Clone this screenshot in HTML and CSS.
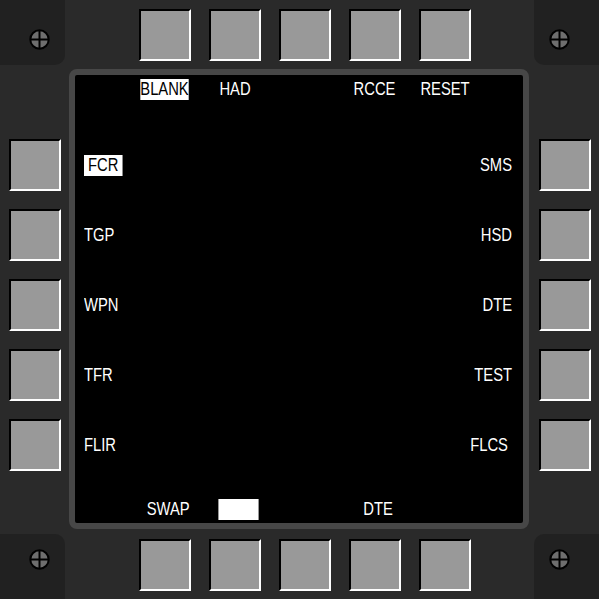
FILE: index.html
```html
<!DOCTYPE html>
<html>
<head>
<meta charset="utf-8">
<title>MFD</title>
<link rel="stylesheet" href="styles.css">
</head>
<body>
<div class="device">
  <div class="corner tl"><svg class="screw" viewBox="0 0 21 21"><circle cx="10.5" cy="10.5" r="9.2"/><path d="M10.5 1v19M1 10.5h19"/></svg></div>
  <div class="btns row top-btns">
    <div class="btn"></div><div class="btn"></div><div class="btn"></div><div class="btn"></div><div class="btn"></div>
  </div>
  <div class="corner tr"><svg class="screw" viewBox="0 0 21 21"><circle cx="10.5" cy="10.5" r="9.2"/><path d="M10.5 1v19M1 10.5h19"/></svg></div>

  <div class="btns col left-btns">
    <div class="btn"></div><div class="btn"></div><div class="btn"></div><div class="btn"></div><div class="btn"></div>
  </div>
  <div class="screen">
    <div class="top-row">
      <div class="cell"><span class="lbl inv">BLANK</span></div>
      <div class="cell"><span class="lbl">HAD</span></div>
      <div class="cell"></div>
      <div class="cell"><span class="lbl">RCCE</span></div>
      <div class="cell"><span class="lbl">RESET</span></div>
    </div>
    <div class="mid">
      <div class="side left">
        <div class="cell"><span class="lbl inv pad">FCR</span></div>
        <div class="cell"><span class="lbl">TGP</span></div>
        <div class="cell"><span class="lbl">WPN</span></div>
        <div class="cell"><span class="lbl">TFR</span></div>
        <div class="cell"><span class="lbl">FLIR</span></div>
      </div>
      <div class="side right">
        <div class="cell"><span class="lbl">SMS</span></div>
        <div class="cell"><span class="lbl">HSD</span></div>
        <div class="cell"><span class="lbl">DTE</span></div>
        <div class="cell"><span class="lbl">TEST</span></div>
        <div class="cell"><span class="lbl trail">FLCS</span></div>
      </div>
    </div>
    <div class="bottom-row">
      <div class="cell"><span class="lbl">SWAP</span></div>
      <div class="cell"><span class="lbl inv empty"></span></div>
      <div class="cell"></div>
      <div class="cell"><span class="lbl">DTE</span></div>
      <div class="cell"></div>
    </div>
  </div>
  <div class="btns col right-btns">
    <div class="btn"></div><div class="btn"></div><div class="btn"></div><div class="btn"></div><div class="btn"></div>
  </div>

  <div class="corner bl"><svg class="screw" viewBox="0 0 21 21"><circle cx="10.5" cy="10.5" r="9.2"/><path d="M10.5 1v19M1 10.5h19"/></svg></div>
  <div class="btns row bottom-btns">
    <div class="btn"></div><div class="btn"></div><div class="btn"></div><div class="btn"></div><div class="btn"></div>
  </div>
  <div class="corner br"><svg class="screw" viewBox="0 0 21 21"><circle cx="10.5" cy="10.5" r="9.2"/><path d="M10.5 1v19M1 10.5h19"/></svg></div>
</div>
</body>
</html>
```
FILE: styles.css
```css
html, body {
  margin: 0;
  padding: 0;
  background: #2a2a2a;
}
.device {
  width: 599px;
  height: 599px;
  display: grid;
  grid-template-columns: 69px 460px 70px;
  grid-template-rows: 69px 460px 70px;
  background: #2a2a2a;
  overflow: hidden;
}
.corner {
  width: 65px;
  height: 65px;
  background: #212121;
  box-sizing: border-box;
  display: flex;
}
.corner.tl { border-bottom-right-radius: 10px; padding: 29px 0 0 29px; }
.corner.tr { justify-self: end; border-bottom-left-radius: 10px; padding: 29px 0 0 15px; }
.corner.bl { align-self: end; border-top-right-radius: 10px; padding: 15px 0 0 29px; }
.corner.br { justify-self: end; align-self: end; border-top-left-radius: 10px; padding: 15px 0 0 15px; }
.screw {
  width: 21px;
  height: 21px;
  display: block;
}
.screw circle {
  fill: #6e6e6e;
  stroke: #000;
  stroke-width: 2;
}
.screw path {
  stroke: #000;
  stroke-width: 2;
  fill: none;
}
.btns {
  display: flex;
  gap: 18px;
}
.btns.row { flex-direction: row; padding-left: 70px; }
.btns.col { flex-direction: column; padding-top: 70px; }
.top-btns { padding-top: 9px; }
.bottom-btns { padding-top: 10px; }
.left-btns { padding-left: 9px; }
.right-btns { padding-left: 10px; }
.btn {
  width: 52px;
  height: 52px;
  box-sizing: border-box;
  background: #999999;
  border: 2px solid;
  border-color: #000 #fff #fff #000;
  flex: none;
}
.screen {
  width: 460px;
  height: 460px;
  box-sizing: border-box;
  border: 6px solid #474747;
  border-radius: 8px;
  background: #000;
  display: flex;
  flex-direction: column;
}
.top-row {
  height: 55px;
  box-sizing: border-box;
  padding: 4px 0 0 55px;
  display: flex;
  align-items: flex-start;
}
.top-row .cell, .bottom-row .cell {
  width: 70px;
  display: flex;
  justify-content: center;
}
.mid {
  height: 350px;
  display: flex;
  justify-content: space-between;
}
.side {
  display: flex;
  flex-direction: column;
}
.side .cell {
  height: 70px;
  display: flex;
  align-items: center;
}
.left { padding-left: 9px; }
.left .cell { justify-content: flex-start; }
.left .lbl { transform-origin: left center; }
.right { padding-right: 11px; }
.right .cell { justify-content: flex-end; }
.right .lbl { transform-origin: right center; }
.bottom-row {
  height: 43px;
  box-sizing: border-box;
  padding: 19px 0 0 58px;
  display: flex;
  align-items: flex-start;
}
.lbl {
  display: inline-block;
  font-family: "Liberation Sans", Arial, sans-serif;
  font-size: 18px;
  line-height: 21px;
  height: 21px;
  color: #fff;
  white-space: pre;
  transform: scaleX(0.82);
  transform-origin: center center;
}
.lbl.inv {
  background: #fff;
  color: #000;
}
.lbl.pad { padding: 0 5px; }
.lbl.trail { padding-right: 5px; }
.lbl.empty { width: 49px; }
```
